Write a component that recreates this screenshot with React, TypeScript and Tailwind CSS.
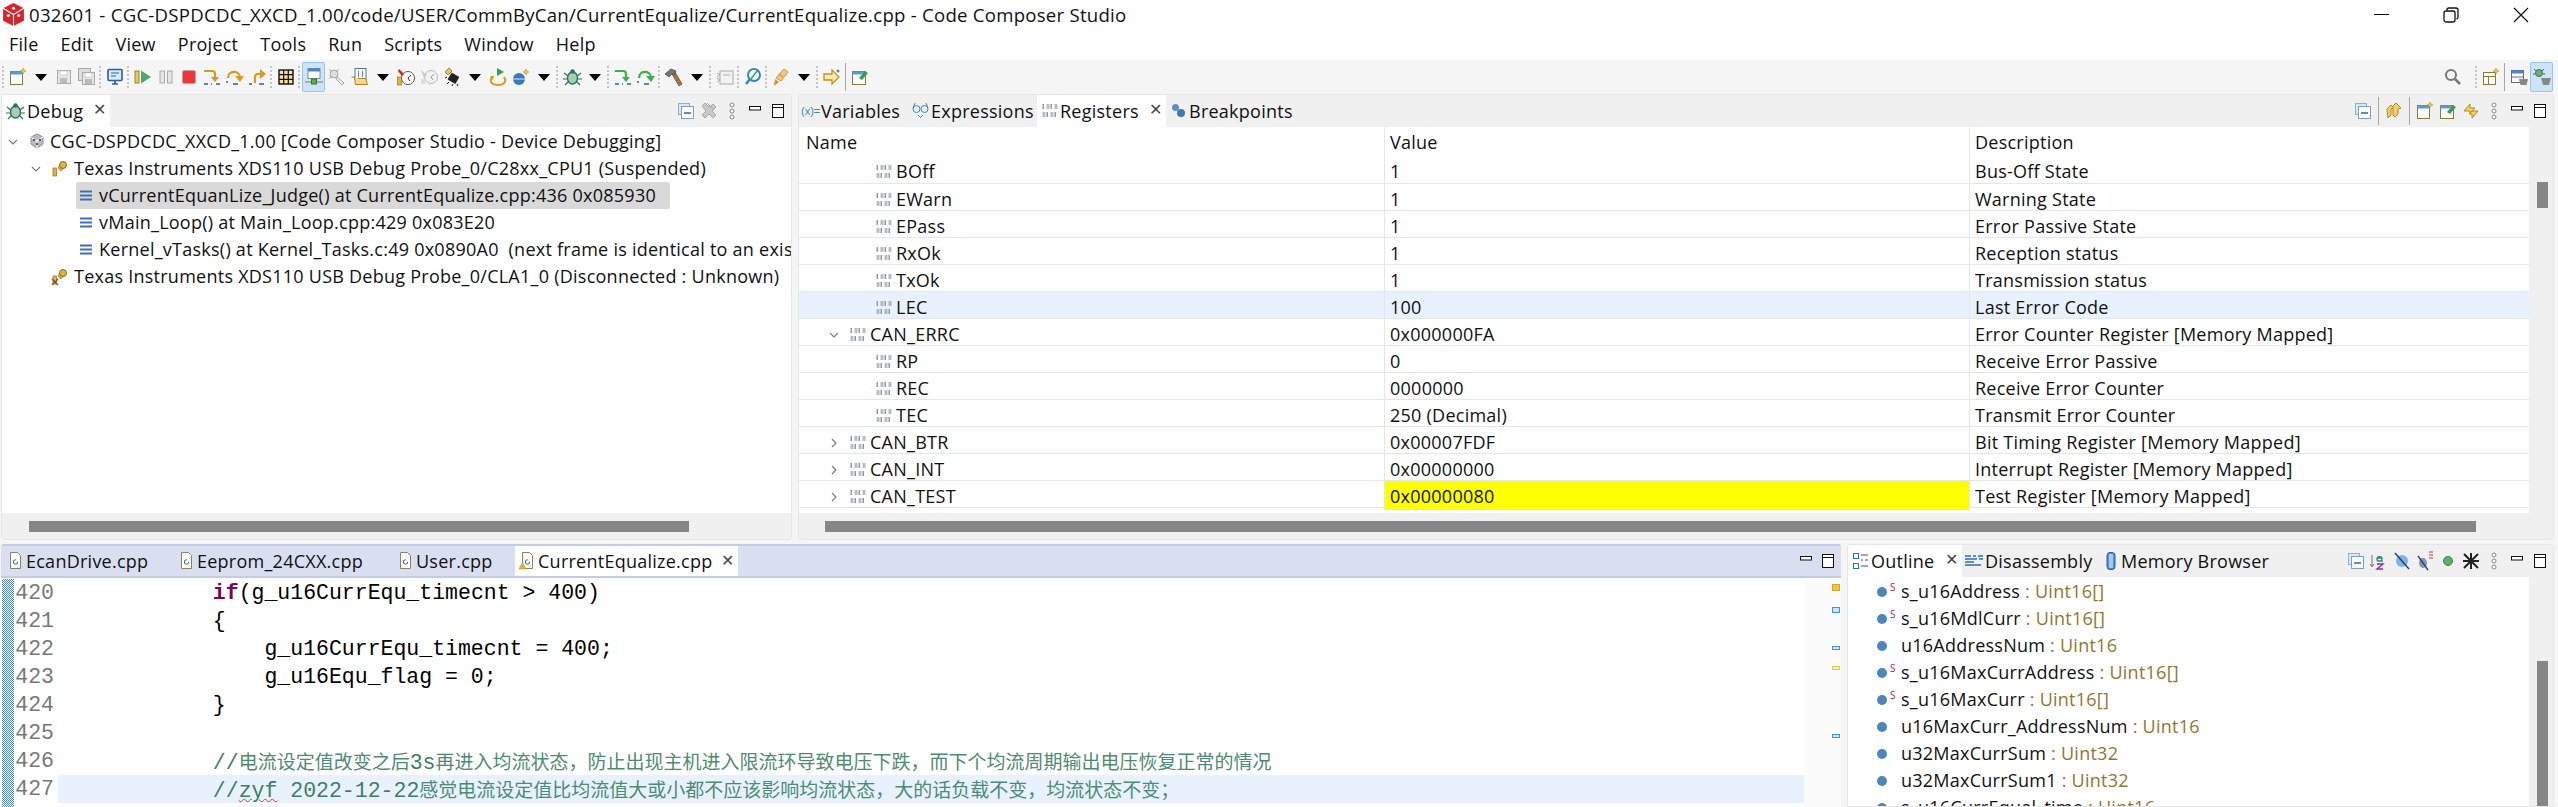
import React from "react";

const ui = "font-['Open_Sans','Noto_Sans_CJK_SC',sans-serif] text-[18px] tracking-[0.25px] text-[#111]";

type P = { c?: string };

function Svg({ c = "", children }: P & { children: React.ReactNode }) {
  return (
    <svg viewBox="0 0 20 20" className={`h-[20px] w-[20px] shrink-0 ${c}`} fill="none">
      {children}
    </svg>
  );
}

const NewFile = () => (
  <Svg>
    <rect x="2.5" y="4.5" width="12" height="13" fill="#fff" stroke="#8c7a3c" />
    <rect x="2.5" y="4.5" width="12" height="3" fill="#5b9bd5" />
    <path d="M15 1l1 2 2 1-2 1-1 2-1-2-2-1 2-1z" fill="#e8c34a" stroke="#b58b1c" strokeWidth=".5" />
  </Svg>
);
const Save = ({ all }: { all?: boolean }) => (
  <Svg>
    {all && <rect x="1.5" y="1.5" width="12" height="12" fill="#ddd" stroke="#aaa" />}
    <rect x={all ? 5.5 : 3.5} y={all ? 5.5 : 3.5} width={all ? 12 : 13} height={all ? 12 : 13} fill="#e6e6e6" stroke="#aaa" />
    <rect x={all ? 8 : 6} y={all ? 6 : 4} width="7" height="4" fill="#fff" stroke="#bbb" strokeWidth=".6" />
    <rect x={all ? 8 : 6} y={all ? 12 : 11} width="7" height="5" fill="#bbb" />
  </Svg>
);
const Monitor = () => (
  <Svg>
    <rect x="3" y="2.5" width="14" height="11" rx="1" fill="#dce9f7" stroke="#2a5f9e" strokeWidth="1.6" />
    <path d="M6 6h8M6 9h5" stroke="#2a5f9e" />
    <path d="M7 17h6M10 14v3" stroke="#2a5f9e" strokeWidth="1.6" />
  </Svg>
);
const Resume = () => (
  <Svg>
    <rect x="2" y="4" width="4" height="12" fill="#e8c860" stroke="#9b8330" />
    <path d="M8 3.5l10 6.5-10 6.5z" fill="#56a36b" />
  </Svg>
);
const Pause = () => (
  <Svg>
    <rect x="4" y="4" width="4.5" height="12" fill="#e6e6e6" stroke="#aaa" />
    <rect x="11.5" y="4" width="4.5" height="12" fill="#e6e6e6" stroke="#aaa" />
  </Svg>
);
const Stop = () => (
  <Svg>
    <rect x="3.5" y="3.5" width="13" height="13" rx="1.5" fill="#e8383c" stroke="#c9a0a0" />
  </Svg>
);
const StepInto = ({ color = "#d99a22", line = "#2a5f9e" }: { color?: string; line?: string }) => (
  <Svg>
    <path d="M2 4h8c2 0 3 1 3 3v4" stroke={color} strokeWidth="2.2" />
    <path d="M9 10h8l-4 5z" fill={color} />
    <path d="M2 17h4M9 17h1M14 17h4" stroke={line} strokeWidth="1.4" />
  </Svg>
);
const StepOver = ({ color = "#d99a22", line = "#2a5f9e" }: { color?: string; line?: string }) => (
  <Svg>
    <path d="M3 11c0-8 11-8 12-1" stroke={color} strokeWidth="2.2" />
    <path d="M10 9h9l-4 6z" fill={color} />
    <path d="M2 14v2M8 17h5" stroke={line} strokeWidth="1.4" />
  </Svg>
);
const StepReturn = () => (
  <Svg>
    <path d="M7 16v-6c0-2 1-3 3-3h3" stroke="#d99a22" strokeWidth="2.2" />
    <path d="M12 2v10l6-5z" fill="#d99a22" />
    <path d="M1 17h3M11 17h5" stroke="#2a5f9e" strokeWidth="1.4" />
  </Svg>
);
const Grid = () => (
  <Svg>
    <rect x="3" y="3" width="14" height="14" fill="#f6dfa0" stroke="#111" strokeWidth="1.4" />
    <path d="M7.7 3v14M12.3 3v14M3 7.7h14M3 12.3h14" stroke="#111" strokeWidth="1.2" />
  </Svg>
);
const Active = () => (
  <Svg>
    <rect x="4" y="1.5" width="12" height="10" fill="#fff" stroke="#7a8aa0" />
    <rect x="4" y="1.5" width="12" height="3" fill="#4a86c8" />
    <rect x="7.5" y="12" width="5" height="5" fill="#5fae4e" stroke="#2c7a2c" />
    <path d="M1 15h6M13 15h6" stroke="#999" strokeWidth="1.4" />
  </Svg>
);
const Tool = () => (
  <Svg>
    <circle cx="7" cy="7" r="4" fill="#ddd" stroke="#aaa" />
    <path d="M2 2l3 3M12 2l-3 3M2 12l3-3" stroke="#aaa" />
    <path d="M10 10l7 6-2 2-6-6z" fill="#eee" stroke="#aaa" />
  </Svg>
);
const OpenFile = () => (
  <Svg>
    <rect x="5" y="1.5" width="11" height="11" fill="#fff" stroke="#5b7595" />
    <path d="M9 4c-1 0 0 3-1 3 1 0 0 3 1 3M12 4c1 0 0 3 1 3-1 0 0 3-1 3" stroke="#2a5f9e" />
    <path d="M1.5 10l3 0 1 7.5h12l-2-6H8" fill="#f2d98c" stroke="#a8842c" />
  </Svg>
);
const RedPin = () => (
  <Svg>
    <circle cx="12" cy="11" r="6.5" fill="#fff" stroke="#555" />
    <path d="M12 11l3-3M12 11l2 3" stroke="#333" />
    <path d="M3 2l5 5-2 2-4-5z" fill="#e01a1a" />
    <rect x="1.5" y="10" width="4" height="8" fill="#e8b33c" stroke="#8a6a1c" strokeWidth=".6" />
  </Svg>
);
const GrayPin = () => (
  <Svg>
    <circle cx="12" cy="10" r="6.5" fill="#f2f2f2" stroke="#bbb" />
    <path d="M12 10l3-3M12 10l2 3" stroke="#999" />
    <path d="M2 3l6 5-3 3z" fill="#ccc" />
    <rect x="2" y="12" width="4" height="5" fill="#ddd" />
  </Svg>
);
const Chip = () => (
  <Svg>
    <path d="M3 5l4-4 3 3-4 4z" fill="#eec550" stroke="#a8842c" />
    <rect x="7" y="7" width="9" height="8" transform="rotate(30 11 11)" fill="#222" />
    <path d="M5 10l-2 1M7 15l-2 2M11 17l-1 2M15 17l1 2" stroke="#222" />
  </Svg>
);
const Restart = () => (
  <Svg>
    <path d="M9 1l7 4-7 4z" fill="#3d9a5a" />
    <path d="M4 10c-3 5 0 8 6 8s9-3 6-8" stroke="#d99a22" strokeWidth="2" />
    <path d="M2 9l4 0-1 4z" fill="#d99a22" />
  </Svg>
);
const Ball = () => (
  <Svg>
    <circle cx="8" cy="12" r="6" fill="#3c78bb" />
    <path d="M2 12h12" stroke="#dbe8f5" />
    <path d="M15 2l1 2 2 1-2 1-1 2-1-2-2-1 2-1z" fill="#eec550" stroke="#a8842c" strokeWidth=".5" />
  </Svg>
);
const Bug = ({ c }: P) => (
  <Svg c={c}>
    <ellipse cx="10.5" cy="11" rx="5" ry="6" fill="#a9cfa6" stroke="#2f6f6a" strokeWidth="1.4" />
    <circle cx="10.5" cy="4.5" r="2.2" fill="#2f6f6a" />
    <path d="M2 6l4 3M19 6l-4 3M1 12h4M20 12h-4M3 18l3-3M18 18l-3-3" stroke="#2f6f6a" strokeWidth="1.2" />
  </Svg>
);
const Hammer = () => (
  <Svg>
    <path d="M8 7l3-2 7 12-3 2z" fill="#a9713f" stroke="#6b4423" strokeWidth=".7" />
    <path d="M1 7l6-5 5 2-1 3-3 0-3 3z" fill="#777" stroke="#444" strokeWidth=".7" />
  </Svg>
);
const BoxGray = () => (
  <Svg>
    <rect x="5" y="4" width="13" height="13" fill="#f3f3f3" stroke="#aaa" />
    <path d="M2 6l3 2-3 2M8 8h7" stroke="#aaa" />
    <path d="M2 11l3 2-3 2" stroke="#aaa" />
  </Svg>
);
const Lens = () => (
  <Svg>
    <circle cx="11" cy="8" r="6" fill="#fff" stroke="#2d8ca8" strokeWidth="1.9" />
    <path d="M7 12l-4 5" stroke="#2d8ca8" strokeWidth="2.4" />
    <path d="M14 4l-6 8" stroke="#2d8ca8" strokeWidth="1.4" />
  </Svg>
);
const Pin = () => (
  <Svg>
    <path d="M5 11l8-9 4 3-7 9z" fill="#eeca8a" stroke="#c39a4a" />
    <path d="M4 12l4 3-5 4z" fill="#c9963a" />
    <path d="M8 7l4 3" stroke="#e8a13c" strokeWidth="2" />
  </Svg>
);
const ArrowNew = () => (
  <Svg>
    <path d="M2 7h8V3l7 7-7 7v-4H2z" fill="#fbe9b0" stroke="#c2901e" strokeWidth="1.3" />
    <path d="M16 2l.7 1.5 1.6.5-1.6.5L16 6l-.7-1.5L13.7 4l1.6-.5z" fill="#2a5f9e" />
  </Svg>
);
const NoteGreen = () => (
  <Svg>
    <rect x="2.5" y="4.5" width="13" height="13" fill="#fff" stroke="#8c7a3c" />
    <rect x="2.5" y="4.5" width="13" height="3" fill="#5b9bd5" />
    <path d="M9 11l6-7 3 2-6 7z" fill="#3d9a5a" />
  </Svg>
);
const Search = () => (
  <Svg>
    <circle cx="8" cy="8" r="5" stroke="#777" strokeWidth="2" />
    <path d="M12 12l5 5" stroke="#777" strokeWidth="2.5" />
  </Svg>
);
const Perspective = () => (
  <Svg>
    <rect x="2.5" y="5.5" width="12" height="12" fill="#fff" stroke="#8c7a3c" />
    <path d="M2.5 9.5h12M7.5 9.5v8" stroke="#8c7a3c" />
    <path d="M15 1l1 2 2 1-2 1-1 2-1-2-2-1 2-1z" fill="#eec550" stroke="#a8842c" strokeWidth=".5" />
  </Svg>
);
const PerspA = () => (
  <Svg>
    <rect x="2.5" y="3.5" width="12" height="12" fill="#fff" stroke="#667" />
    <rect x="2.5" y="3.5" width="12" height="3" fill="#4a86c8" />
    <path d="M2.5 10h12" stroke="#667" />
    <path d="M10 12h9l-1.5 6h-6z" fill="#888" />
  </Svg>
);
const PerspB = () => (
  <Svg>
    <circle cx="7" cy="6" r="3.5" fill="#6fb36b" stroke="#2f6f6a" />
    <path d="M2 2l2 2M12 2l-2 2M1 7h2M13 7h-2" stroke="#2f6f6a" />
    <path d="M9 11h10l-2 7h-6z" fill="#888" />
  </Svg>
);
const Collapse = () => (
  <Svg>
    <rect x="2.5" y="2.5" width="11" height="11" fill="#dbe6f2" stroke="#8eb0d0" />
    <rect x="5.5" y="5.5" width="12" height="12" fill="#fff" stroke="#7ba2c6" />
    <path d="M8 12h7" stroke="#1f5a8c" strokeWidth="1.4" />
  </Svg>
);
const RemoveX = () => (
  <Svg>
    <path d="M3 5l3-3 4 4 4-3 3 3-4 4 4 4-3 3-4-4-4 4-3-3 4-4z" fill="#c8c8c8" stroke="#aaa" />
    <path d="M8 2l6 6" stroke="#aaa" />
  </Svg>
);
const Dots3 = () => (
  <Svg>
    <circle cx="10" cy="4" r="2" fill="#fff" stroke="#888" />
    <circle cx="10" cy="10" r="2" fill="#fff" stroke="#888" />
    <circle cx="10" cy="16" r="2" fill="#fff" stroke="#888" />
  </Svg>
);
const MinBtn = () => (
  <Svg>
    <rect x="4.5" y="5.5" width="11" height="3.5" fill="#fff" stroke="#111" />
  </Svg>
);
const MaxBtn = () => (
  <Svg>
    <rect x="4.5" y="3.5" width="11" height="13" fill="#fff" stroke="#111" />
    <path d="M4.5 6.5h11" stroke="#111" />
  </Svg>
);
const Reg = () => (
  <svg viewBox="0 0 16 14" className="h-[14px] w-[16px] shrink-0">
    {[0, 8].map((y) =>
      [0, 4, 8, 12].map((x, i) => (
        <rect key={`${x}-${y}`} x={x + 0.5} y={y} width={(y === 0) === (i % 2 === 0) ? 1.5 : 3} height="5" fill="#8d9aa8" opacity={(y === 0) === (i % 2 === 0) ? 1 : 0.65} />
      )),
    )}
  </svg>
);
const VarIcon = () => (
  <span className="w-[18px] shrink-0 text-[11px] leading-none tracking-normal text-[#3a86c8] font-['Liberation_Sans',sans-serif]">(x)=</span>
);
const Glasses = () => (
  <Svg>
    <circle cx="5.5" cy="8" r="3.5" stroke="#3a86c8" />
    <circle cx="13.5" cy="8" r="3.5" stroke="#3a86c8" />
    <path d="M2 7l2-5M17 7l-2-5M7 14l3 3M12 14l-3 3" stroke="#3a86c8" />
  </Svg>
);
const BpIcon = () => (
  <Svg>
    <circle cx="6.5" cy="6.5" r="3.5" fill="#5c8fc0" />
    <circle cx="12" cy="12" r="4" fill="#3c78bb" />
  </Svg>
);
const Frame = () => (
  <svg viewBox="0 0 14 14" className="h-[14px] w-[14px] shrink-0">
    <path d="M1 2.5h12M1 6.5h12M1 10.5h12" stroke="#3c6fb5" strokeWidth="2.2" />
  </svg>
);
const Launch = () => (
  <Svg>
    <path d="M10 2l6 3v7l-6 4-6-4V5z" fill="#b9bcc2" stroke="#8d8f94" />
    <path d="M10 9v7M4 5l6 4 6-4" stroke="#fff" />
    <circle cx="7" cy="8" r="1" fill="#333" />
    <circle cx="13" cy="8" r="1" fill="#333" />
    <circle cx="10" cy="12" r="1" fill="#333" />
  </Svg>
);
const Probe = ({ off }: { off?: boolean }) => (
  <Svg>
    <rect x="2" y="9" width="3.5" height="8" fill="#e8b33c" stroke="#8a6a1c" strokeWidth=".7" />
    <path d="M7 9l3-4 3 3-3 4z" fill="#e8b33c" stroke="#8a6a1c" strokeWidth=".7" />
    <circle cx="12" cy="6" r="3.5" fill="#e2b33c" stroke="#8a6a1c" />
    {off && <path d="M1 12l6 6M7 12l-6 6" stroke="#8b4a32" strokeWidth="1.4" />}
  </Svg>
);
const FileC = ({ warn }: { warn?: boolean }) => (
  <Svg>
    <path d="M4.5 1.5h7l3 3v13h-10z" fill="#fff" stroke="#8c8458" />
    <circle cx="9.5" cy="11" r="2.2" stroke="#2a5f9e" strokeDasharray="10 3" />
    {warn && <path d="M1 18l3.5-7 3.5 7z" fill="#e8b33c" stroke="#a8842c" strokeWidth=".5" />}
  </Svg>
);
const OutlineIc = () => (
  <Svg>
    <rect x="2.5" y="2.5" width="5" height="5" fill="#fff" stroke="#2a6fb5" />
    <rect x="2.5" y="12.5" width="5" height="5" fill="#fff" stroke="#2a6fb5" />
    <path d="M10 4h7M10 9h2M14 9h3M10 15h7" stroke="#888" strokeWidth="1.4" />
  </Svg>
);
const DisasmIc = () => (
  <Svg>
    <path d="M1 5h6M9 5h3M14 5h5M1 8h12M15 8h4M1 11h9M1 14h16" stroke="#2a6fb5" strokeWidth="1.7" />
  </Svg>
);
const MemIc = () => (
  <Svg>
    <rect x="6" y="1.5" width="8" height="17" rx="3" fill="#5a8fd0" stroke="#2a5f9e" />
    <rect x="8" y="3" width="4" height="14" rx="1" fill="#a8c8ec" />
  </Svg>
);
const Sep = () => <div className="mx-[1px] h-[22px] w-[3px] shrink-0 border-l-[2px] border-dotted border-[#c4c4c4]" />;
const Bar = () => <div className="mx-[2px] h-[28px] w-px shrink-0 bg-[#a8a8a8]" />;
const Drop = () => (
  <div className="flex w-[23px] shrink-0 justify-center">
    <div className="h-0 w-0 border-x-[6px] border-t-[7px] border-x-transparent border-t-black" />
  </div>
);
const Tb = ({ children, on }: { children: React.ReactNode; on?: boolean }) => (
  <div className={`flex h-[30px] w-[23px] shrink-0 items-center justify-center rounded-[2px] ${on ? "border border-[#90c8f6] bg-[#cde4f7]" : ""}`}>{children}</div>
);

const toolbar: React.ReactNode[] = [
  <Sep />, <Tb><NewFile /></Tb>, <Drop />, <Tb><Save /></Tb>, <Tb><Save all /></Tb>, <Sep />, <Tb><Monitor /></Tb>, <Sep />,
  <Tb><Resume /></Tb>, <Tb><Pause /></Tb>, <Tb><Stop /></Tb>, <Tb><StepInto /></Tb>, <Tb><StepOver /></Tb>, <Tb><StepReturn /></Tb>, <Sep />,
  <Tb><Grid /></Tb>, <Sep />, <Tb on><Active /></Tb>, <Tb><Tool /></Tb>, <Tb><OpenFile /></Tb>, <Drop />, <Tb><RedPin /></Tb>, <Tb><GrayPin /></Tb>,
  <Tb><Chip /></Tb>, <Drop />, <Tb><Restart /></Tb>, <Tb><Ball /></Tb>, <Drop />, <Sep />, <Tb><Bug /></Tb>, <Drop />, <Sep />,
  <Tb><StepInto color="#3fae49" line="#2a5f9e" /></Tb>, <Tb><StepOver color="#3fae49" line="#2a5f9e" /></Tb>, <Sep />, <Tb><Hammer /></Tb>, <Drop />, <Sep />,
  <Tb><BoxGray /></Tb>, <Sep />, <Tb><Lens /></Tb>, <Sep />, <Tb><Pin /></Tb>, <Drop />, <Sep />, <Tb><ArrowNew /></Tb>, <Bar />, <Tb><NoteGreen /></Tb>,
];

function Tab({ cls, icon, label, close, active }: { cls: string; icon: React.ReactNode; label: string; close?: boolean; active?: boolean }) {
  return (
    <div className={`relative flex h-full shrink-0 items-center ${active ? "bg-white" : ""} ${cls}`}>
      {icon}
      <span className="whitespace-nowrap">{label}</span>
      {close && <span className="absolute right-[4px] top-[6px] text-[16px] font-light leading-[16px] text-[#444]">✕</span>}
    </div>
  );
}

const tree = [
  { cls: "pl-[5px]", chev: true, icon: <Launch />, gap: "ml-[8px]", text: "CGC-DSPDCDC_XXCD_1.00 [Code Composer Studio - Device Debugging]" },
  { cls: "pl-[28px]", chev: true, icon: <Probe />, gap: "ml-[9px]", text: "Texas Instruments XDS110 USB Debug Probe_0/C28xx_CPU1 (Suspended)" },
  { cls: "pl-[49px]", icon: <Probe off />, gap: "", text: "Texas Instruments XDS110 USB Debug Probe_0/CLA1_0 (Disconnected : Unknown)" },
];

const frames = [
  { text: "vCurrentEquanLize_Judge() at CurrentEqualize.cpp:436 0x085930", sel: true },
  { text: "vMain_Loop() at Main_Loop.cpp:429 0x083E20" },
  { text: "Kernel_vTasks() at Kernel_Tasks.c:49 0x0890A0  (next frame is identical to an exist" },
];

const regs: { n: string; v: string; d: string; exp?: "d" | "r" }[] = [
  { n: "BOff", v: "1", d: "Bus-Off State" },
  { n: "EWarn", v: "1", d: "Warning State" },
  { n: "EPass", v: "1", d: "Error Passive State" },
  { n: "RxOk", v: "1", d: "Reception status" },
  { n: "TxOk", v: "1", d: "Transmission status" },
  { n: "LEC", v: "100", d: "Last Error Code" },
  { n: "CAN_ERRC", v: "0x000000FA", d: "Error Counter Register [Memory Mapped]", exp: "d" },
  { n: "RP", v: "0", d: "Receive Error Passive" },
  { n: "REC", v: "0000000", d: "Receive Error Counter" },
  { n: "TEC", v: "250 (Decimal)", d: "Transmit Error Counter" },
  { n: "CAN_BTR", v: "0x00007FDF", d: "Bit Timing Register [Memory Mapped]", exp: "r" },
  { n: "CAN_INT", v: "0x00000000", d: "Interrupt Register [Memory Mapped]", exp: "r" },
  { n: "CAN_TEST", v: "0x00000080", d: "Test Register [Memory Mapped]", exp: "r" },
];

const Chev = ({ dir }: { dir: "d" | "r" }) => (
  <svg viewBox="0 0 12 12" className="h-[12px] w-[12px] shrink-0">
    <path d={dir === "d" ? "M2 4l4 4 4-4" : "M4 2l4 4-4 4"} fill="none" stroke="#777" strokeWidth="1.1" />
  </svg>
);

const mono = "font-['Liberation_Mono','Noto_Sans_CJK_SC',monospace] text-[21.5px] tracking-normal";
const cjk = "font-['Noto_Sans_CJK_SC',sans-serif] text-[19px] text-[#4f8b70]";

const outline = [
  { s: true, n: "s_u16Address", t: "Uint16[]" },
  { s: true, n: "s_u16MdlCurr", t: "Uint16[]" },
  { n: "u16AddressNum", t: "Uint16" },
  { s: true, n: "s_u16MaxCurrAddress", t: "Uint16[]" },
  { s: true, n: "s_u16MaxCurr", t: "Uint16[]" },
  { n: "u16MaxCurr_AddressNum", t: "Uint16" },
  { n: "u32MaxCurrSum", t: "Uint32" },
  { n: "u32MaxCurrSum1", t: "Uint32" },
  { n: "s_u16CurrEqual_time", t: "Uint16" },
];

function TreeRow({ r }: { r: (typeof tree)[number] }) {
  return (
    <div className={`flex h-[27px] items-center whitespace-pre ${r.cls}`}>
      {r.chev && <Chev dir="d" />}
      <div className={`flex shrink-0 items-center ${r.gap}`}>{r.icon}</div>
      <span className="ml-[3px]">{r.text}</span>
    </div>
  );
}

export default function App() {
  return (
    <div className={`flex h-[807px] w-[2558px] flex-col overflow-hidden bg-white ${ui}`}>
      {/* title */}
      <div className="flex h-[29px] shrink-0 items-center">
        <svg viewBox="0 0 24 24" className="ml-[1px] h-[25px] w-[25px] shrink-0">
          <path d="M12 1l10 5v12l-10 5-10-5V6z" fill="#d8232a" />
          <path d="M12 12l10-6M12 12L2 6M12 12v11" stroke="#fff" strokeWidth="1" />
          <circle cx="12" cy="6" r="1.5" fill="#fff" />
          <circle cx="7" cy="13" r="1.5" fill="#fff" />
          <circle cx="17" cy="13" r="1.5" fill="#fff" />
        </svg>
        <span className="ml-[3px] whitespace-nowrap text-[18.6px]">032601 - CGC-DSPDCDC_XXCD_1.00/code/USER/CommByCan/CurrentEqualize/CurrentEqualize.cpp - Code Composer Studio</span>
        <div className="ml-auto mr-[29px] flex items-center gap-[54px]">
          <div className="h-px w-[15px] bg-black" />
          <svg viewBox="0 0 16 16" className="h-[16px] w-[16px]">
            <rect x="1" y="4" width="11" height="11" rx="2" fill="#fff" stroke="#111" strokeWidth="1.3" />
            <path d="M4 3.5V3a2 2 0 012-2h7a2 2 0 012 2v7a2 2 0 01-1.5 2" fill="none" stroke="#111" strokeWidth="1.3" />
          </svg>
          <svg viewBox="0 0 16 16" className="h-[16px] w-[16px]">
            <path d="M1 1l14 14M15 1L1 15" stroke="#111" strokeWidth="1.2" />
          </svg>
        </div>
      </div>
      {/* menu */}
      <div className="flex h-[31px] shrink-0 items-center gap-[22px] pl-[9px]">
        {["File", "Edit", "View", "Project", "Tools", "Run", "Scripts", "Window", "Help"].map((m) => (
          <span key={m}>{m}</span>
        ))}
      </div>
      {/* toolbar */}
      <div className="flex h-[34px] shrink-0 items-center bg-[#f5f5f5] pl-[1px]">
        {toolbar.map((t, i) => (
          <React.Fragment key={i}>{t}</React.Fragment>
        ))}
        <div className="ml-auto mr-[5px] flex items-center">
          <Tb><Search /></Tb>
          <div className="w-[10px]" />
          <Sep />
          <Tb><Perspective /></Tb>
          <Bar />
          <Tb><PerspA /></Tb>
          <Tb on><PerspB /></Tb>
        </div>
      </div>

      <div className="flex min-h-0 flex-1 flex-col bg-[#f5f5f5]">
        <div className="flex h-[446px] shrink-0 gap-[6px] pl-[1px] pr-[4px]">
          {/* debug */}
          <section className="flex w-[791px] shrink-0 flex-col rounded-[3px] border border-[#e6e6e6] bg-white">
            <div className="flex h-[32px] shrink-0 items-center bg-[#f0f0f0]">
              <Tab active close cls="w-[108px] pl-[3px] gap-[2px]" icon={<Bug />} label="Debug" />
              <div className="ml-auto mr-[3px] flex items-center gap-[3px]">
                <Collapse />
                <RemoveX />
                <Dots3 />
                <MinBtn />
                <MaxBtn />
              </div>
            </div>
            <div className="min-h-0 flex-1 overflow-hidden pt-px">
              <TreeRow r={tree[0]} />
              <TreeRow r={tree[1]} />
              {frames.map((f) => (
                <div key={f.text} className="flex h-[27px] whitespace-pre pl-[74px]">
                  <div className={`flex h-full w-[594px] shrink-0 items-center gap-[6px] rounded-[2px] pl-[3px] ${f.sel ? "bg-[#d9d9d9]" : ""}`}>
                    <Frame />
                    <span>{f.text}</span>
                  </div>
                </div>
              ))}
              <TreeRow r={tree[2]} />
            </div>
            <div className="flex h-[26px] shrink-0 items-center bg-[#f0f0f0] pl-[27px]">
              <div className="h-[11px] w-[660px] bg-[#868686]" />
            </div>
          </section>
          {/* registers */}
          <section className="flex min-w-0 flex-1 flex-col rounded-[3px] border border-[#e6e6e6] bg-white">
            <div className="flex h-[32px] shrink-0 items-center bg-[#f0f0f0]">
              <Tab cls="w-[110px] pl-[2px] gap-[2px]" icon={<VarIcon />} label="Variables" />
              <Tab cls="w-[128px] pl-[2px] gap-[0px]" icon={<Glasses />} label="Expressions" />
              <Tab active close cls="w-[129px] pl-[5px] gap-[2px]" icon={<Reg />} label="Registers" />
              <Tab cls="w-[130px] pl-[3px] gap-[0px]" icon={<BpIcon />} label="Breakpoints" />
              <div className="ml-auto mr-[3px] flex items-center gap-[3px]">
                <Collapse />
                <Bar />
                <Svg>
                  <path d="M3 8l4-4 3 3-3 1v6l-3 3z" fill="#f2cf6a" stroke="#b58b1c" />
                  <path d="M9 5l3-3 5 5-3 1v5l-3 3-2-2z" fill="#f2cf6a" stroke="#b58b1c" />
                </Svg>
                <Bar />
                <NewFile />
                <NoteGreen />
                <Svg>
                  <path d="M3 10l6-7v4h5l-5 5v-2H6z" fill="#f2cf6a" stroke="#b58b1c" />
                  <path d="M17 10l-6 7v-4H8l3-3h6z" fill="#f2cf6a" stroke="#b58b1c" />
                </Svg>
                <Dots3 />
                <MinBtn />
                <MaxBtn />
              </div>
            </div>
            <div className="flex min-h-0 flex-1 overflow-hidden">
              <div className="w-[1730px] shrink-0">
                <div className="grid h-[29px] grid-cols-[586px_585px_1fr] items-center">
                  <div className="flex h-full items-center border-r border-[#e6e6e6] pl-[7px] pt-[2px]">Name</div>
                  <div className="flex h-full items-center border-r border-[#e6e6e6] pl-[5px] pt-[2px]">Value</div>
                  <div className="flex h-full items-center pl-[5px] pt-[2px]">Description</div>
                </div>
                {regs.map((r, i) => (
                  <div key={r.n} className={`grid h-[27px] grid-cols-[586px_585px_1fr] border-[#e6e6e6] ${i > 0 ? "border-t" : ""} ${r.n === "LEC" ? "bg-[#e8f2fe]" : ""}`}>
                    <div className={`flex items-center border-r border-[#e6e6e6] pt-[2px] ${r.exp ? "pl-[29px]" : "pl-[77px] gap-[4px]"}`}>
                      {r.exp && <Chev dir={r.exp} />}
                      <div className={r.exp ? "ml-[10px] mr-[4px] flex" : "flex"}>
                        <Reg />
                      </div>
                      <span>{r.n}</span>
                    </div>
                    <div className={`flex items-center border-r border-[#e6e6e6] pl-[5px] pt-[2px] ${r.n === "CAN_TEST" ? "bg-[#ffff00]" : ""}`}>{r.v}</div>
                    <div className="flex items-center pl-[5px] pt-[2px]">{r.d}</div>
                  </div>
                ))}
                <div className="h-[5px] border-t border-[#e6e6e6]" />
              </div>
              <div className="flex w-[25px] shrink-0 justify-center bg-[#f0f0f0] pt-[55px] pl-[2px]">
                <div className="h-[26px] w-[11px] bg-[#868686]" />
              </div>
            </div>
            <div className="flex h-[26px] shrink-0 items-center bg-[#f0f0f0] pl-[26px]">
              <div className="h-[11px] w-[1651px] bg-[#868686]" />
            </div>
          </section>
        </div>

        <div className="mt-[4px] flex min-h-0 flex-1 gap-[6px] pl-[1px] pr-[4px]">
          {/* editor */}
          <section className="flex w-[1840px] shrink-0 flex-col overflow-hidden rounded-t-[3px] border-t-2 border-[#c5cbe0] bg-white">
            <div className="flex h-[32px] shrink-0 items-center border-b-2 border-[#c5cbe0] bg-[#d9dff0]">
              <Tab cls="w-[171px] pl-[5px] gap-[0px]" icon={<FileC />} label="EcanDrive.cpp" />
              <Tab cls="w-[219px] pl-[5px] gap-[0px]" icon={<FileC />} label="Eeprom_24CXX.cpp" />
              <Tab cls="w-[124px] pl-[5px] gap-[0px]" icon={<FileC />} label="User.cpp" />
              <Tab active close cls="w-[223px] pl-[3px] gap-[0px]" icon={<FileC warn />} label="CurrentEqualize.cpp" />
              <div className="ml-auto mr-[3px] flex items-center gap-[2px]">
                <MinBtn />
                <MaxBtn />
              </div>
            </div>
            <div className="flex min-h-0 flex-1 pt-px">
              <div className="ml-[1px] w-[12px] shrink-0 bg-[repeating-conic-gradient(#3b8fd6_0_25%,#ffffff_0_50%)] bg-[length:2px_2px]" />
              <div className={`w-[40px] shrink-0 text-right leading-[28px] text-[#787878] ${mono}`}>
                {[420, 421, 422, 423, 424, 425, 426, 427].map((n) => (
                  <div key={n} className="h-[28px]">{n}</div>
                ))}
              </div>
              <div className={`ml-[4px] w-[1746px] shrink-0 whitespace-pre leading-[28px] text-black ${mono}`}>
                <div className="h-[28px]">            <b className="text-[#7f0055]">if</b>(g_u16CurrEqu_timecnt &gt; 400)</div>
                <div className="h-[28px]">            {"{"}</div>
                <div className="h-[28px]">                g_u16CurrEqu_timecnt = 400;</div>
                <div className="h-[28px]">                g_u16Equ_flag = 0;</div>
                <div className="h-[28px]">            {"}"}</div>
                <div className="h-[28px]" />
                <div className="h-[28px] text-[#3f7f5f]">            //<span className={cjk}>电流设定值改变之后</span>3s<span className={cjk}>再进入均流状态，防止出现主机进入限流环导致电压下跌，而下个均流周期输出电压恢复正常的情况</span></div>
                <div className="h-[28px] bg-[#e8f2fe] text-[#3f7f5f]">            //<span className="underline decoration-[#e53935] decoration-wavy decoration-1">zyf</span> 2022-12-22<span className={cjk}>感觉电流设定值比均流值大或小都不应该影响均流状态，大的话负载不变，均流状态不变；</span></div>
              </div>
              <div className="relative min-w-0 flex-1 bg-[#fbfbfb]">
                <div className="absolute left-[28px] top-[5px] h-[7px] w-[8px] border border-[#d9a52e] bg-[#f2c23c]" />
                <div className="absolute left-[28px] top-[28px] h-[6px] w-[8px] border border-[#3c94ec] bg-[#cfe4fb]" />
                <div className="absolute left-[28px] top-[67px] h-[4px] w-[8px] border border-[#3c94ec] bg-[#cfe4fb]" />
                <div className="absolute left-[28px] top-[87px] h-[4px] w-[8px] border border-[#e8c24a] bg-[#fbeeb8]" />
                <div className="absolute left-[28px] top-[155px] h-[4px] w-[8px] border border-[#3c94ec] bg-[#cfe4fb]" />
              </div>
            </div>
          </section>
          {/* outline */}
          <section className="flex min-w-0 flex-1 flex-col rounded-t-[3px] border border-[#e6e6e6] bg-white">
            <div className="flex h-[32px] shrink-0 items-center bg-[#f0f0f0]">
              <Tab active close cls="w-[114px] pl-[3px] gap-[0px]" icon={<OutlineIc />} label="Outline" />
              <Tab cls="w-[139px] pl-[2px] gap-[1px]" icon={<DisasmIc />} label="Disassembly" />
              <Tab cls="w-[200px] pl-[0px] gap-[0px]" icon={<MemIc />} label="Memory Browser" />
              <div className="ml-auto mr-[3px] flex items-center gap-[3px]">
                <Collapse />
                <Svg>
                  <path d="M3 4v12M1 13l2 3 2-3" stroke="#777" />
                  <path d="M8 8c0-3 5-3 5 0v3M13 7H9.5c-2 0-2 3 0 3H13" stroke="#2d8c7c" strokeWidth="1.4" />
                  <path d="M8 13h6l-6 5h6" stroke="#8a2a9c" strokeWidth="1.4" />
                </Svg>
                <Svg>
                  <circle cx="10" cy="10" r="6" fill="#7fb4e0" />
                  <path d="M3 2l14 16" stroke="#1f3f7f" strokeWidth="1.5" />
                </Svg>
                <Svg>
                  <ellipse cx="8" cy="12" rx="4" ry="5" fill="#8c96a5" />
                  <path d="M3 5l10 14" stroke="#1f3f7f" strokeWidth="1.3" />
                  <path d="M14 1h4M14 4h4M14 7h4" stroke="#d2334c" strokeWidth="1" />
                </Svg>
                <Svg>
                  <circle cx="10" cy="10" r="4.5" fill="#5fae6e" stroke="#2f8a4f" />
                </Svg>
                <Svg>
                  <path d="M3 3l14 14M17 3L3 17M10 2v16M2 10h16" stroke="#222" strokeWidth="2" />
                </Svg>
                <Dots3 />
                <MinBtn />
                <MaxBtn />
              </div>
            </div>
            <div className="flex min-h-0 flex-1 overflow-hidden">
              <div className="w-[681px] shrink-0 pt-px">
                {outline.map((r) => (
                  <div key={r.n} className="flex h-[27px] items-center whitespace-nowrap pl-[29px]">
                    <div className="h-[10px] w-[10px] shrink-0 rounded-full bg-[#4d86b8]" />
                    <span className="h-[20px] w-[14px] shrink-0 pl-[3px] text-[10px] leading-[10px] text-[#c4203c]">{r.s ? "S" : ""}</span>
                    <span>{r.n}</span>
                    <span className="whitespace-pre text-[#957530]"> : {r.t}</span>
                  </div>
                ))}
              </div>
              <div className="flex w-[25px] shrink-0 justify-center bg-[#f0f0f0] pl-[2px] pt-[84px]">
                <div className="h-[200px] w-[11px] bg-[#868686]" />
              </div>
            </div>
          </section>
        </div>
      </div>
    </div>
  );
}
